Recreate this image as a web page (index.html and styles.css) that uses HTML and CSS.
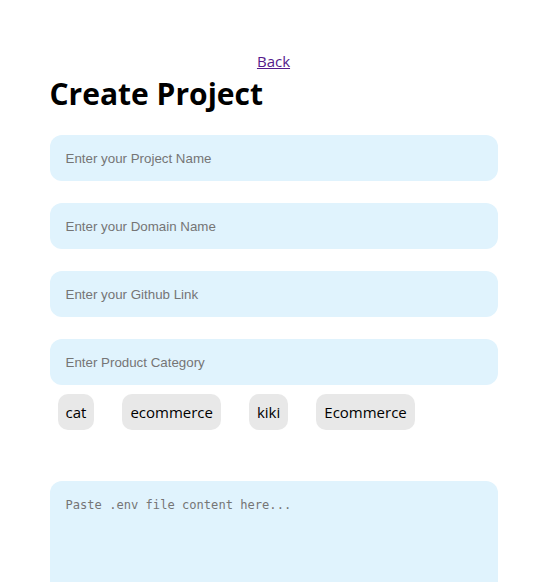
FILE: index.html
```html
<!DOCTYPE html>
<html>
<head>
<meta charset="utf-8">
<link rel="stylesheet" href="styles.css">
</head>
<body>
<div class="container">
  <div class="back-row"><a href="#" class="back">Back</a></div>
  <h1 class="title">Create Project</h1>
  <form class="form">
    <input class="field" type="text" placeholder="Enter your Project Name">
    <input class="field" type="text" placeholder="Enter your Domain Name">
    <input class="field" type="text" placeholder="Enter your Github Link">
    <input class="field field-last" type="text" placeholder="Enter Product Category">
    <div class="chips">
      <span class="chip">cat</span>
      <span class="chip">ecommerce</span>
      <span class="chip">kiki</span>
      <span class="chip">Ecommerce</span>
    </div>
    <textarea class="env" placeholder="Paste .env file content here..."></textarea>
  </form>
</div>
</body>
</html>
```

FILE: styles.css
```css
html, body {
  margin: 0;
  padding: 0;
  background: #ffffff;
}
body {
  font-family: "Open Sans", "Noto Sans", sans-serif;
  color: #000;
}
.container {
  width: 448px;
  margin: 0 auto;
  padding-top: 51px;
}
.back-row {
  text-align: center;
  font-size: 15px;
  line-height: 20px;
}
.back {
  color: #551a8b;
  text-decoration: underline;
}
.title {
  margin: 0;
  font-size: 30px;
  font-weight: 700;
  line-height: 46px;
}
.form {
  display: flex;
  flex-direction: column;
  margin-top: 18px;
}
.field {
  box-sizing: border-box;
  width: 100%;
  height: 46px;
  border: none;
  outline: none;
  border-radius: 12px;
  background: #e0f3fd;
  padding: 0 16px;
  font-family: "Liberation Sans", Arial, sans-serif;
  font-size: 13.33px;
  color: #333;
  margin-bottom: 22px;
}
.field::placeholder {
  color: #757575;
}
.field-last {
  margin-bottom: 9px;
}
.chips {
  display: flex;
  gap: 28px;
  padding-left: 8px;
}
.chip {
  background: #e8e8e8;
  border-radius: 10px;
  height: 36px;
  padding: 0 8px;
  display: flex;
  align-items: center;
  font-size: 15px;
}
.env {
  box-sizing: border-box;
  width: 100%;
  height: 200px;
  margin-top: 51px;
  border: none;
  outline: none;
  resize: none;
  border-radius: 12px;
  background: #e0f3fd;
  padding: 16px;
  font-family: "DejaVu Sans Mono", monospace;
  font-size: 12.1px;
  line-height: 16px;
}
.env::placeholder {
  color: #757575;
}
```
